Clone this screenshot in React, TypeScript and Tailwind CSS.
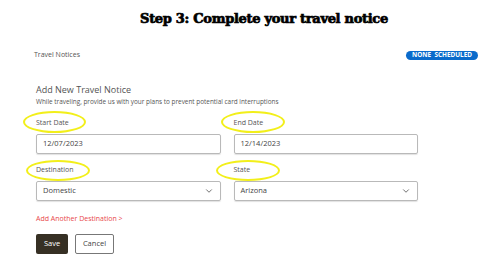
import React from 'react';
import { ChevronDown } from 'lucide-react';

function Ellipse({ className }: { className: string }) {
  return (
    <div
      className={`pointer-events-none absolute rounded-[50%] border-[2px] border-[#f2ef1a] ${className}`}
    />
  );
}

function Field({
  label,
  value,
  select,
}: {
  label: string;
  value: string;
  select?: boolean;
}) {
  return (
    <div className="flex flex-col">
      <div className="h-[12px] text-[7px] leading-[12px] text-[#555]">{label}</div>
      <div className="mt-[5px] flex h-[20px] items-center justify-between rounded-[2px] border border-[#b9b9b9] px-[6px] shadow-[0_1px_1px_rgba(0,0,0,0.12)]">
        <span className="text-[7.5px] text-[#444]">{value}</span>
        {select && <ChevronDown className="h-[10px] w-[10px] text-[#555]" strokeWidth={2} />}
      </div>
    </div>
  );
}

export default function App() {
  return (
    <div
      className="relative h-[276px] w-[500px] overflow-hidden bg-white"
      style={{ fontFamily: '"Open Sans", "Noto Sans", sans-serif' }}
    >
      {/* Title */}
      <h1
        className="pl-[28px] pt-[10px] text-center text-[13px] font-black leading-[18px] tracking-[-0.3px] text-black [-webkit-text-stroke:0.7px_black]"
        style={{ fontFamily: '"DejaVu Serif", "Liberation Serif", serif' }}
      >
        Step 3: Complete your travel notice
      </h1>

      {/* Travel Notices bar */}
      <div className="mt-[22px] flex items-center justify-between pl-[34px] pr-[22px]">
        <span className="text-[7px] text-[#555]">Travel Notices</span>
        <span className="flex h-[9px] w-[72px] items-center justify-center rounded-full bg-[#0b6bcb] text-[6.4px] font-bold leading-none text-white">
          NONE&nbsp;&nbsp;SCHEDULED
        </span>
      </div>

      {/* Form */}
      <div className="relative mt-[22px] w-[418px] pl-[36px]">
        <div className="text-[9px] leading-[13px] text-[#555]">Add New Travel Notice</div>
        <div className="mt-[1px] text-[6.4px] leading-[9px] text-[#555]">
          While traveling, provide us with your plans to prevent potential card interruptions
        </div>

        <div className="mt-[11px] grid grid-cols-2 gap-x-[13px] gap-y-[10px]">
          <Field label="Start Date" value="12/07/2023" />
          <Field label="End Date" value="12/14/2023" />
          <Field label="Destination" value="Domestic" select />
          <Field label="State" value="Arizona" select />
        </div>

        <div className="mt-[13px] text-[7px] text-[#e8474a]">Add Another Destination &gt;</div>

        <div className="mt-[10px] flex gap-[7px]">
          <button
            type="button"
            className="h-[20px] w-[32px] rounded-[2px] bg-[#363024] text-[7.5px] text-white"
          >
            Save
          </button>
          <button
            type="button"
            className="h-[20px] w-[39px] rounded-[2px] border border-[#777] bg-white text-[7.5px] text-[#444]"
          >
            Cancel
          </button>
        </div>
      </div>

      {/* Annotations */}
      <Ellipse className="left-[23px] top-[111px] h-[22px] w-[63px]" />
      <Ellipse className="left-[221px] top-[111px] h-[22px] w-[64px]" />
      <Ellipse className="left-[26px] top-[160px] h-[21px] w-[64px]" />
      <Ellipse className="left-[216px] top-[160px] h-[21px] w-[64px]" />
    </div>
  );
}
